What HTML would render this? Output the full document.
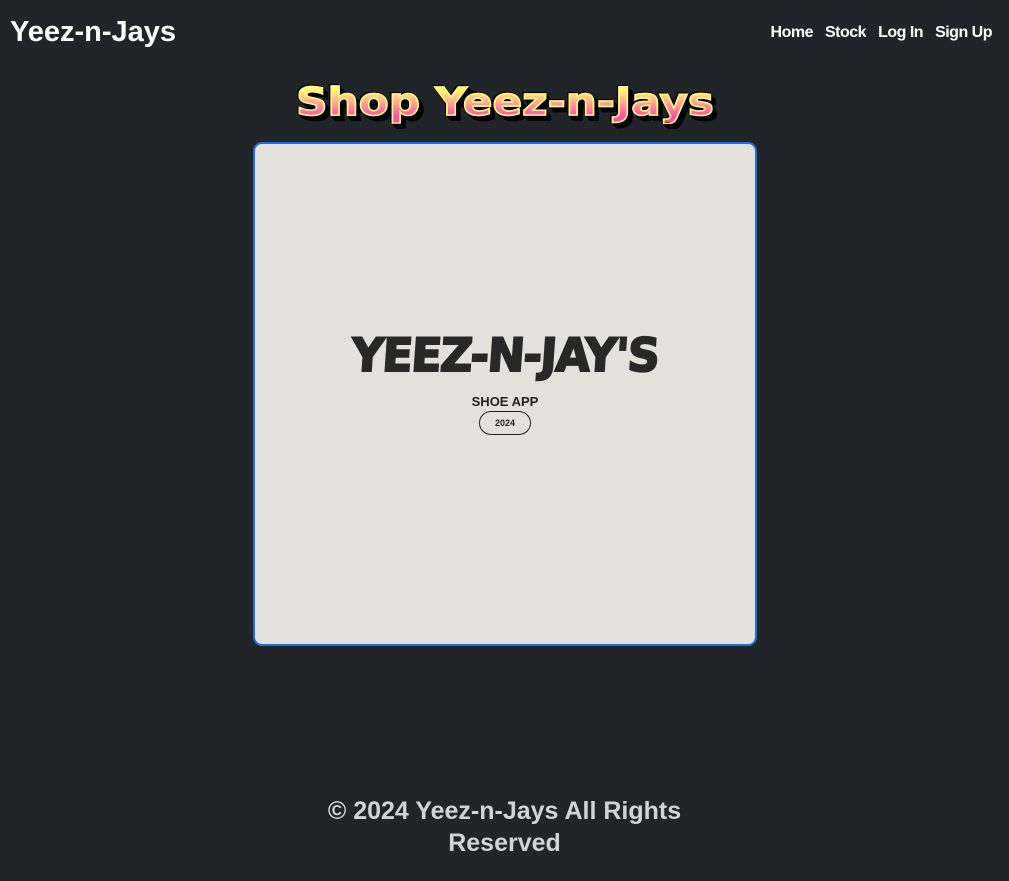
<!DOCTYPE html>
<html><head><style>
body{margin:0;background:#212529;width:1009px;height:881px;overflow:hidden;font-family:"Liberation Sans",sans-serif;position:relative}
.brand{position:absolute;left:10px;top:16px;color:#fff;font-size:29px;font-weight:bold}
.nav{position:absolute;right:17px;top:24px;color:#fff;font-size:16px;font-weight:bold;letter-spacing:-0.5px}
.nav span{margin-left:12px}
.title{position:absolute;left:294px;top:82px;width:422px;text-align:center;font-size:38px;font-weight:900;letter-spacing:0px;font-family:"DejaVu Sans",sans-serif;
background:linear-gradient(#fff87a 20%,#ff4fb0 85%);-webkit-background-clip:text;color:transparent;filter:drop-shadow(3px 4px 0 #000) drop-shadow(-1px -1px 0 #000) drop-shadow(1px 1px 0 #000);line-height:40px;transform:scaleX(1.15);-webkit-text-stroke:1.5px #fff87a}
.card{position:absolute;left:253px;top:142px;width:500px;height:500px;border:2px solid #1c6fe0;border-radius:9px;background:#e3e1dc}
.logo{position:absolute;left:0;right:0;top:184px;text-align:center;font-size:46px;font-weight:900;color:#282828;font-family:"DejaVu Sans",sans-serif;letter-spacing:-1.5px;transform:skewX(-4deg) scaleX(0.97);-webkit-text-stroke:2px #282828}
.sub{position:absolute;left:0;right:0;top:250px;text-align:center;font-size:13px;font-weight:bold;color:#222}
.pill{position:absolute;left:224px;top:267px;width:50px;height:22px;border:1.5px solid #222;border-radius:12px;font-size:9px;font-weight:bold;text-align:center;line-height:22px;color:#222}
.foot{position:absolute;left:0;right:0;top:795px;text-align:center;color:#ced4da;font-size:25px;font-weight:bold;line-height:32px}
</style></head><body>
<div class="brand">Yeez-n-Jays</div>
<div class="nav"><span>Home</span><span>Stock</span><span>Log In</span><span>Sign Up</span></div>
<div class="title">Shop Yeez-n-Jays</div>
<div class="card">
<div class="logo">YEEZ-N-JAY'S</div>
<div class="sub">SHOE APP</div>
<div class="pill">2024</div>
</div>
<div class="foot">© 2024 Yeez-n-Jays All Rights<br>Reserved</div>
</body></html>
